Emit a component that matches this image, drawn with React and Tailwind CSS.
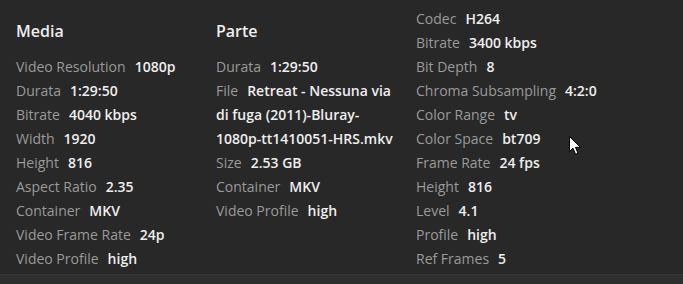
import React from 'react';

const media = [
  ['Video Resolution', '1080p'],
  ['Durata', '1:29:50'],
  ['Bitrate', '4040 kbps'],
  ['Width', '1920'],
  ['Height', '816'],
  ['Aspect Ratio', '2.35'],
  ['Container', 'MKV'],
  ['Video Frame Rate', '24p'],
  ['Video Profile', 'high'],
];

const parte = [
  ['Durata', '1:29:50'],
  ['File', 'Retreat - Nessuna via di fuga (2011)-Bluray-1080p-tt1410051-HRS.mkv'],
  ['Size', '2.53 GB'],
  ['Container', 'MKV'],
  ['Video Profile', 'high'],
];

const stream = [
  ['Codec', 'H264'],
  ['Bitrate', '3400 kbps'],
  ['Bit Depth', '8'],
  ['Chroma Subsampling', '4:2:0'],
  ['Color Range', 'tv'],
  ['Color Space', 'bt709'],
  ['Frame Rate', '24 fps'],
  ['Height', '816'],
  ['Level', '4.1'],
  ['Profile', 'high'],
  ['Ref Frames', '5'],
];

const Row = ({ label, value }) => (
  <div className="leading-[24px]">
    <span className="text-[#9a9a9a]">{label}</span>
    <span className="ml-[9px] font-semibold text-[#eeeeee]">{value}</span>
  </div>
);

const Column = ({ title, rows }) => (
  <div className="w-[200px] pr-[18px]">
    {title && (
      <h3 className="h-[48px] flex items-center text-[16px] font-semibold text-[#eeeeee]">{title}</h3>
    )}
    {rows.map(([l, v], i) => (
      <Row key={i} label={l} value={v} />
    ))}
  </div>
);

export default function App() {
  return (
    <div className="relative w-[683px] h-[284px] bg-[#282828] overflow-hidden text-[14px] font-['Open_Sans',sans-serif]">
      <div className="flex px-[16px] pt-[7px] h-[274px]">
        <Column title="Media" rows={media} />
        <Column title="Parte" rows={parte} />
        <Column rows={stream} />
      </div>
      <div className="h-[10px] bg-[#2f2f2f] border-t border-[#353535]" />
      <svg className="absolute left-[569px] top-[136px]" width="13" height="20" viewBox="0 0 13 20">
        <path d="M0.5 0.5 L0.5 15.5 L4 12.2 L6.6 18.3 L9 17.3 L6.5 11.3 L11.5 11.3 Z" fill="#ffffff" stroke="#000000" strokeWidth="1" />
      </svg>
    </div>
  );
}
